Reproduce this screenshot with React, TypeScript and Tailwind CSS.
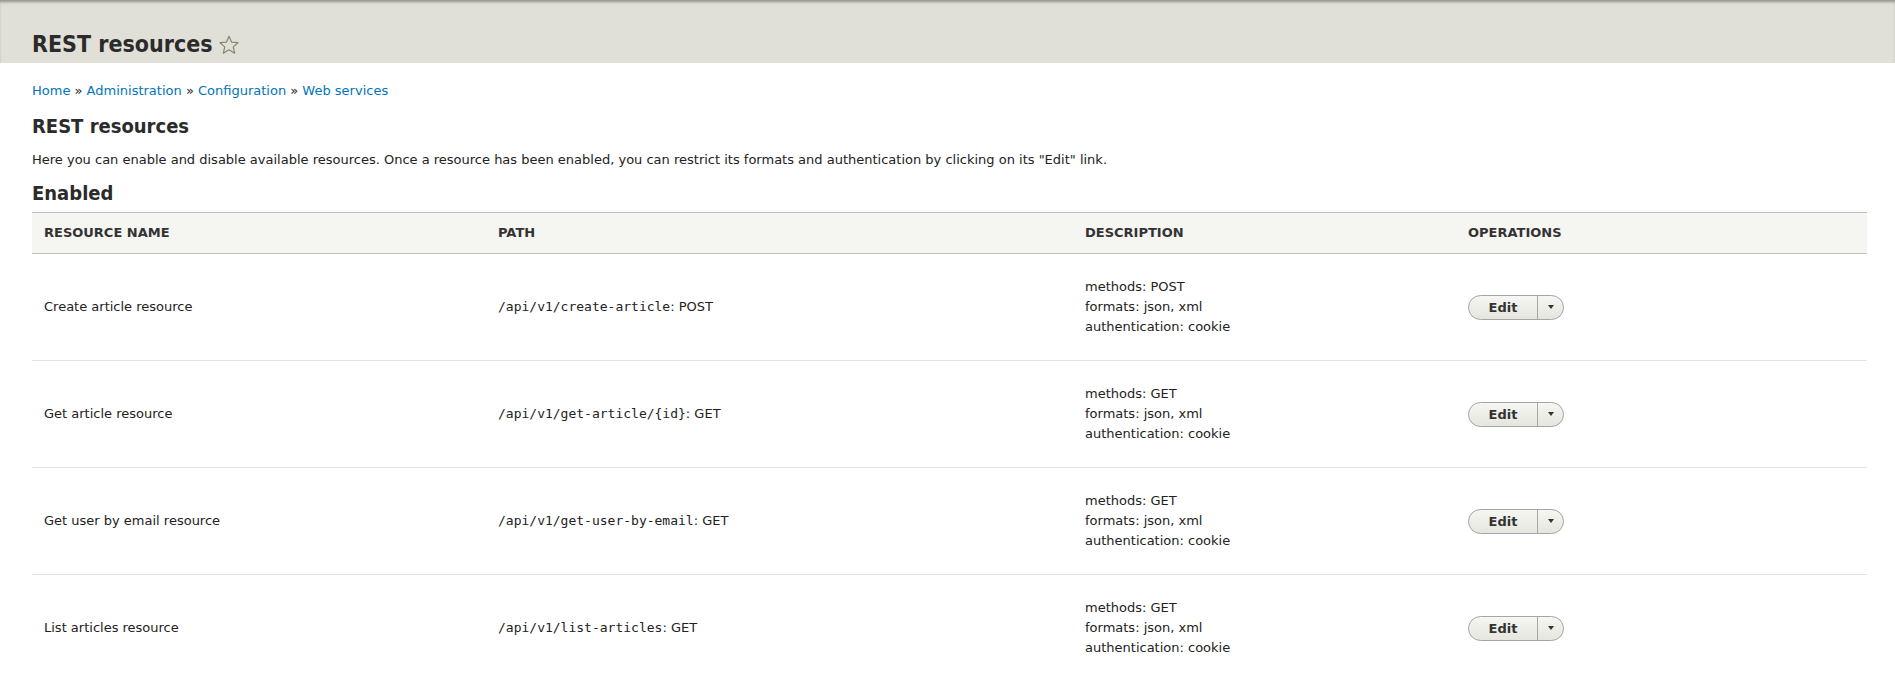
import React from 'react';

const rows = [
  { name: 'Create article resource', path: '/api/v1/create-article', method: 'POST' },
  { name: 'Get article resource', path: '/api/v1/get-article/{id}', method: 'GET' },
  { name: 'Get user by email resource', path: '/api/v1/get-user-by-email', method: 'GET' },
  { name: 'List articles resource', path: '/api/v1/list-articles', method: 'GET' },
];

const crumbs = ['Home', 'Administration', 'Configuration', 'Web services'];

const Star = () => (
  <svg width="22" height="22" viewBox="0 0 24 24" className="ml-[5px] mt-[1px]">
    <path
      d="M12 2.5l2.9 6.4 6.9.6-5.2 4.6 1.6 6.8L12 17.3l-6.2 3.6 1.6-6.8-5.2-4.6 6.9-.6z"
      fill="none"
      stroke="#86866f"
      strokeWidth="1.3"
      strokeLinejoin="round"
    />
  </svg>
);

const EditButton = () => (
  <div className="inline-flex h-[25px] rounded-full border border-[#a6a6a6] bg-gradient-to-b from-[#f6f6f2] to-[#e6e6df] text-[13px] font-bold text-[#333]">
    <button className="w-[68px] font-bold leading-[23px]">Edit</button>
    <span className="flex w-[26px] items-center justify-center border-l border-[#a6a6a6]">
      <span className="h-0 w-0 border-x-[3.5px] border-t-[4px] border-x-transparent border-t-[#333]" />
    </span>
  </div>
);

export default function App() {
  return (
    <div className="min-h-screen bg-white font-['DejaVu_Sans',sans-serif] text-[13px] text-[#222]">
      {/* Header */}
      <header className="h-[63px] bg-[#e0e0d8] px-8 pt-[30px] shadow-[inset_0_3px_3px_-1px_rgba(0,0,0,0.35)]">
        <h1 className="flex items-center font-['DejaVu_Sans_Condensed','DejaVu_Sans',sans-serif] [font-stretch:condensed] text-[23px] font-bold leading-[28px] text-[#2b2b2b]">
          REST resources
          <Star />
        </h1>
      </header>

      <main className="pl-8 pr-[28px]">
        {/* Breadcrumb */}
        <nav className="pt-[18px] leading-[20px]">
          {crumbs.map((c, i) => (
            <React.Fragment key={c}>
              {i > 0 && <span className="text-[#222]"> » </span>}
              <a href="#" className="text-[#0074bd]">{c}</a>
            </React.Fragment>
          ))}
        </nav>

        <h2 className="mt-[13px] font-['DejaVu_Sans_Condensed','DejaVu_Sans',sans-serif] [font-stretch:condensed] text-[20px] font-bold leading-[24px] text-[#2b2b2b]">
          REST resources
        </h2>
        <p className="mt-[12px] leading-[20px]">
          Here you can enable and disable available resources. Once a resource has been enabled, you can restrict its formats and authentication by clicking on its "Edit" link.
        </p>

        <h3 className="mt-[11px] font-['DejaVu_Sans_Condensed','DejaVu_Sans',sans-serif] [font-stretch:condensed] text-[20px] font-bold leading-[24px] text-[#2b2b2b]">
          Enabled
        </h3>

        <table className="mt-[7px] w-full table-fixed border-collapse">
          <colgroup>
            <col className="w-[454px]" />
            <col className="w-[587px]" />
            <col className="w-[383px]" />
            <col />
          </colgroup>
          <thead>
            <tr className="h-[41px] border-y border-[#bfbfba] bg-[#f5f5f2] text-left text-[13px] font-bold uppercase text-[#333]">
              <th className="px-3">Resource name</th>
              <th className="px-3">Path</th>
              <th className="px-3">Description</th>
              <th className="px-3">Operations</th>
            </tr>
          </thead>
          <tbody>
            {rows.map((r) => (
              <tr key={r.path} className="h-[107px] border-b border-[#e6e4df] align-middle">
                <td className="px-3">{r.name}</td>
                <td className="px-3">
                  <code className="font-['DejaVu_Sans_Mono',monospace] text-[13px]">{r.path}</code>: {r.method}
                </td>
                <td className="px-3 leading-[20px]">
                  <div>methods: {r.method}</div>
                  <div>formats: json, xml</div>
                  <div>authentication: cookie</div>
                </td>
                <td className="px-3">
                  <EditButton />
                </td>
              </tr>
            ))}
          </tbody>
        </table>
      </main>
    </div>
  );
}
